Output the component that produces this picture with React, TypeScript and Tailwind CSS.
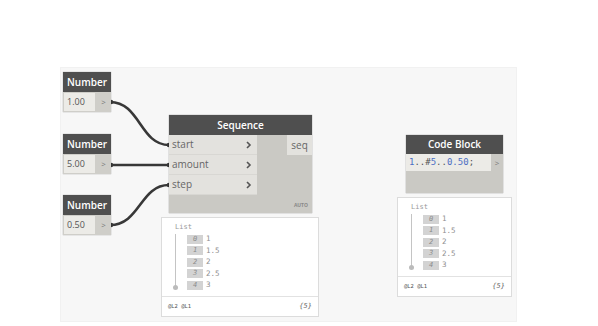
const mono = "font-['DejaVu_Sans_Mono',monospace]";

const NumberNode = ({ x, y, value }: { x: number; y: number; value: string }) => (
  <div
    className="absolute w-[48px] font-['Open_Sans',sans-serif] shadow-[0_0_1px_rgba(0,0,0,0.4)]"
    style={{ left: x, top: y }}
  >
    <div className="h-[20px] bg-[#4f4f4f] px-[4px] text-[10px] font-semibold leading-[20px] text-white">Number</div>
    <div className="flex h-[20px] bg-[#cfcec9]">
      <div className="m-[1px] flex w-[31px] items-center bg-[#ecebe7] pl-[3px] text-[9px] text-[#555]">{value}</div>
      <div className="flex flex-1 items-center justify-center text-[8px] text-[#777]">&gt;</div>
    </div>
  </div>
);

const Chevron = () => (
  <svg width="6" height="8" viewBox="0 0 6 8">
    <path d="M1 1l3 3-3 3" fill="none" stroke="#555" strokeWidth="1.6" />
  </svg>
);

const Preview = ({ x, y, w, h, items }: { x: number; y: number; w: number; h: number; items: string[] }) => (
  <div
    className={`absolute flex flex-col border border-[#dcdcdc] bg-white ${mono}`}
    style={{ left: x, top: y, width: w, height: h }}
  >
    <div className="relative flex-1 pl-[13px] pt-[4px]">
      <div className="text-[7px] leading-[10px] text-[#999]">List</div>
      <div className="absolute left-[13px] top-[16px] h-[52px] w-px bg-[#c4c4c4]" />
      <div className="absolute left-[11px] top-[67px] h-[5px] w-[5px] rounded-full bg-[#bbb]" />
      <div className="mt-[2px] flex flex-col gap-[1.5px] pl-[12px]">
        {items.map((v, i) => (
          <div key={i} className="flex h-[10px] items-center gap-[3px]">
            <div className="flex h-[9px] w-[16px] items-center justify-center bg-[#d3d3d3] text-[7px] italic text-[#8a8a8a]">
              {i}
            </div>
            <div className="text-[7.5px] text-[#8f8f8f]">{v}</div>
          </div>
        ))}
      </div>
    </div>
    <div className="flex h-[20px] items-center justify-between border-t border-[#e2e2e2] px-[6px]">
      <span className="text-[5.5px] text-[#555]">@L2 @L1</span>
      <span className="text-[7px] italic text-[#666]">{"{5}"}</span>
    </div>
  </div>
);

export default function App() {
  const items = ["1", "1.5", "2", "2.5", "3"];
  return (
    <div className="h-[326px] w-[598px] bg-white">
      <div className="h-[67px]" />
      <div className="relative ml-[60px] h-[255px] w-[457px] border border-[#f1f1f1] bg-[#f7f7f7]">
        <svg className="absolute left-[-61px] top-[-68px]" width="598" height="326">
          <g fill="none" stroke="#383838" strokeWidth="2.6">
            <path d="M110 102 C140 102 140 145 169 145" />
            <path d="M110 165 C140 165 140 165 169 165" />
            <path d="M110 225 C140 225 140 185 169 185" />
          </g>
          <g fill="#383838">
            <circle cx="111" cy="102" r="2.3" />
            <circle cx="111" cy="165" r="2.3" />
            <circle cx="111" cy="225" r="2.3" />
            <circle cx="169" cy="145" r="2.3" />
            <circle cx="169" cy="165" r="2.3" />
            <circle cx="169" cy="185" r="2.3" />
          </g>
        </svg>

        <NumberNode x={2} y={4} value="1.00" />
        <NumberNode x={2} y={66} value="5.00" />
        <NumberNode x={2} y={127} value="0.50" />

        {/* Sequence */}
        <div className="absolute left-[108px] top-[47px] w-[143px] font-['Open_Sans',sans-serif] shadow-[0_0_1px_rgba(0,0,0,0.5)]">
          <div className="h-[20px] bg-[#4f4f4f] text-center text-[10px] font-semibold leading-[20px] text-white">Sequence</div>
          <div className="flex h-[78px] bg-[#cac9c4]">
            <div className="flex w-[88px] flex-col">
              {["start", "amount", "step"].map((n) => (
                <div key={n} className="flex h-[20px] items-center justify-between border-b border-[#d8d7d3] bg-[#e3e2de] pl-[3px] pr-[5px] text-[10px] text-[#666]">
                  <span>{n}</span>
                  <Chevron />
                </div>
              ))}
            </div>
            <div className="flex flex-1 flex-col items-end justify-between">
              <div className="flex h-[20px] w-[25px] items-center justify-center bg-[#e3e2de] text-[10px] text-[#666]">seq</div>
              <div className="pb-[4px] pr-[4px] text-[5px] font-bold text-[#888]">AUTO</div>
            </div>
          </div>
        </div>
        <Preview x={100} y={149} w={158} h={100} items={items} />

        {/* Code Block */}
        <div className="absolute left-[345px] top-[67px] w-[97px] font-['Open_Sans',sans-serif] shadow-[0_0_1px_rgba(0,0,0,0.5)]">
          <div className="h-[19px] bg-[#4f4f4f] text-center text-[10px] font-semibold leading-[19px] text-white">Code Block</div>
          <div className="flex h-[39px] items-start bg-[#cac9c4]">
            <div className={`flex h-[17px] flex-1 items-center bg-[#ecebe7] pl-[3px] text-[9px] ${mono}`}>
              <span className="text-[#4c6fc4]">1</span>
              <span className="text-[#555]">..#</span>
              <span className="text-[#4c6fc4]">5</span>
              <span className="text-[#555]">..</span>
              <span className="text-[#4c6fc4]">0.50</span>
              <span className="text-[#555]">;</span>
            </div>
            <div className="flex h-[17px] w-[12px] items-center justify-center text-[8px] text-[#777]">&gt;</div>
          </div>
        </div>
        <Preview x={336} y={129} w={115} h={100} items={items} />
      </div>
    </div>
  );
}
